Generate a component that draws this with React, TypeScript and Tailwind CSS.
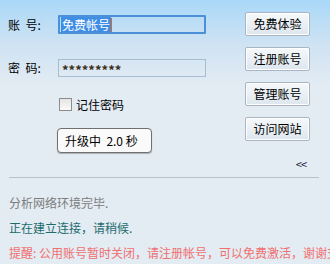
export default function App() {
  const font = { fontFamily: '"Noto Sans CJK SC", "Liberation Sans", sans-serif' };
  const btn =
    'w-[65px] h-[24px] flex items-center justify-center text-[12px] text-black rounded-[2px] border border-[#a9b5c2] bg-[linear-gradient(to_bottom,#f6f9fb,#dde6ee)] shadow-[inset_0_0_0_1px_#ffffff]';

  return (
    <div
      style={font}
      className="w-[330px] h-[264px] overflow-hidden bg-[linear-gradient(to_bottom,#a9d8f8_0px,#cfe3f3_45px,#e3ebf3_85px,#e3ebf3_100%)] text-[12px] leading-none"
    >
      <div className="flex">
        {/* left column */}
        <div className="w-[245px] pl-2 pt-[15px]">
          <div className="flex items-center h-[19px]">
            <span className="w-[50px] text-black">账&nbsp;&nbsp;号:</span>
            <div className="w-[148px] h-[19px] border-2 border-[#4b90d8] rounded-[1px] flex items-center pl-[1px]">
              <span className="bg-[#3f8ee6] text-white h-[15px] flex items-center px-[1px]">免费帐号</span>
              <span className="w-[1px] h-[14px] bg-[#e06a1a]" />
            </div>
          </div>

          <div className="flex items-center h-[18px] mt-[25px]">
            <span className="w-[50px] text-black">密&nbsp;&nbsp;码:</span>
            <div className="w-[148px] h-[18px] border border-[#a7bccd] flex items-center pl-[3px] pt-[3px] text-[#3a3020] text-[13px] font-bold">
              *********
            </div>
          </div>

          <div className="flex items-center mt-[21px] pl-[51px] h-[13px]">
            <span className="w-[13px] h-[13px] border border-[#8c8c8c] bg-[linear-gradient(to_bottom,#e4e4e4,#fafafa)]" />
            <span className="ml-[4px] text-black">记住密码</span>
          </div>

          <div className="mt-[17px] ml-[49px] w-[95px] h-[25px] rounded-[4px] border border-[#707070] bg-[#fafafa] shadow-[0_1px_1px_rgba(0,0,0,0.25)] flex items-center pl-[7px] text-black">
            升级中&nbsp;&nbsp;2.0 秒
          </div>
        </div>

        {/* right column */}
        <div className="flex flex-col pt-[12px] gap-[11px]">
          <div className={btn}>免费体验</div>
          <div className={btn}>注册账号</div>
          <div className={btn}>管理账号</div>
          <div className={btn}>访问网站</div>
          <div className="flex justify-end w-[61px] mt-[7px] text-[11px] text-[#202040] tracking-[-1px]">&lt;&lt;</div>
        </div>
      </div>

      <div className="mx-[9px] w-[310px] h-[1px] bg-[#b6c2ce] mt-[7px]" />

      <div className="pl-[9px] pt-[19px] flex flex-col gap-[13px] whitespace-nowrap">
        <div className="text-[#7c7c7c]">分析网络环境完毕.</div>
        <div className="text-[#1f6b6e]">正在建立连接，请稍候.</div>
        <div className="text-[#f07070]">提醒: 公用账号暂时关闭，请注册帐号，可以免费激活，谢谢支持</div>
      </div>
    </div>
  );
}
